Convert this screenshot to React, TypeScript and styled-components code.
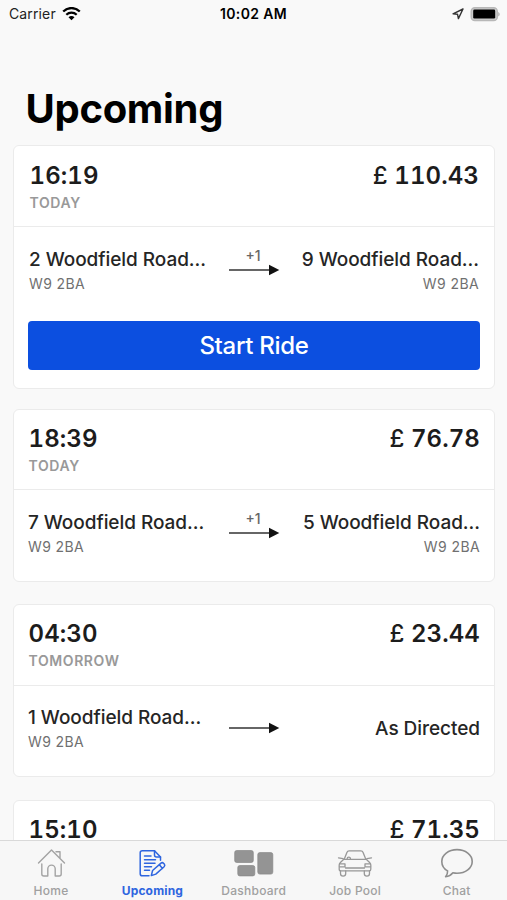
import React from 'react';
import styled, { createGlobalStyle } from 'styled-components';

const GlobalStyle = createGlobalStyle`
  * { box-sizing: border-box; }
  html, body { margin: 0; padding: 0; background: #f9f9f9; }
  body { font-family: Inter, "Liberation Sans", sans-serif; overflow: hidden; }
`;

const Screen = styled.div`
  width: 507px;
  height: 900px;
  display: flex;
  flex-direction: column;
  overflow: hidden;
  background: #f9f9f9;
  color: #1c1c1c;
`;

const StatusBar = styled.header`
  height: 28px;
  flex: none;
  display: grid;
  grid-template-columns: 1fr auto 1fr;
  align-items: center;
  padding: 0 7px 0 9px;
  color: #000;
  font-size: 14px;
  line-height: 28px;
`;

const StatusLeft = styled.div`
  display: flex;
  align-items: center;
  gap: 6px;
  color: #222;
  letter-spacing: 0.13px;
`;

const Clock = styled.div`
  font-weight: 600;
  letter-spacing: 0.35px;
  margin-left: -2px;
`;

const StatusRight = styled.div`
  display: flex;
  align-items: center;
  justify-content: flex-end;
  gap: 6px;
`;

const Title = styled.h1`
  flex: none;
  margin: 54px 0 0;
  padding-left: 25.5px;
  height: 63px;
  font-size: 40px;
  line-height: 54px;
  font-weight: 700;
  letter-spacing: -0.3px;
  color: #000;
`;

const List = styled.main`
  flex: 1;
  min-height: 0;
  overflow: hidden;
  display: flex;
  flex-direction: column;
  padding: 0 12px 0 13px;
`;

const Card = styled.article<{ $height: number; $gap: number; $inset?: boolean }>`
  flex: none;
  height: ${p => p.$height}px;
  margin-bottom: ${p => p.$gap}px;
  border: 1.5px solid #ebebeb;
  border-radius: 6px;
  background: #fff;
  --side: ${p => (p.$inset ? 15 : 14)}px;
  --drop: ${p => (p.$inset ? 1 : 0)}px;
`;

const CardHead = styled.div<{ $height: number }>`
  height: ${p => p.$height}px;
  display: flex;
  justify-content: space-between;
  border-bottom: 1.5px solid #ebebeb;
  padding: calc(14px + var(--drop)) var(--side) 0;
`;

const Time = styled.div`
  padding-left: 0.5px;
  font-size: 24px;
  line-height: 30px;
  font-weight: 640;
  font-variant-numeric: tabular-nums;
  letter-spacing: 0.1px;
`;

const Day = styled.div`
  margin-top: 3px;
  padding-left: 0.5px;
  font-size: 14px;
  line-height: 18px;
  font-weight: 600;
  letter-spacing: 0.6px;
  color: #999;
`;

const Price = styled(Time)`
  text-align: right;
`;

const Currency = styled.span`
  font-weight: 500;
`;

const Route = styled.div<{ $top: number }>`
  display: grid;
  grid-template-columns: 1fr 52px 1fr;
  height: 80px;
  padding: ${p => p.$top}px var(--side) 0;
`;

const Stop = styled.div<{ $end?: boolean; $single?: boolean }>`
  text-align: ${p => (p.$end ? 'right' : 'left')};
  padding-top: ${p => (p.$single ? 11 : 0)}px;
  white-space: nowrap;
`;

const Street = styled.div`
  font-size: 19px;
  line-height: 28px;
  font-weight: 450;
  letter-spacing: -0.05px;
  color: #252525;
`;

const Postcode = styled.div`
  font-size: 14px;
  line-height: 20px;
  letter-spacing: 0.4px;
  color: #707070;
`;

const Leg = styled.div`
  display: flex;
  flex-direction: column;
  align-items: center;
`;

const Extra = styled.div`
  height: 18px;
  margin-right: 2px;
  font-size: 14px;
  line-height: 19px;
  font-weight: 500;
  color: #666;
`;

const StartButton = styled.button`
  display: block;
  width: 452.5px;
  height: 49px;
  margin: 14px auto 0;
  border: 0;
  border-radius: 4px;
  background: #0c4fe0;
  color: #fff;
  font: 450 24px/49px Inter, sans-serif;
  letter-spacing: -0.3px;
  padding: 0;
`;

const TabBar = styled.nav`
  flex: none;
  height: 60px;
  display: grid;
  grid-template-columns: repeat(5, 1fr);
  border-top: 1px solid #d9d9d9;
  background: #f7f7f7;
`;

const Tab = styled.a<{ $active?: boolean }>`
  display: flex;
  flex-direction: column;
  align-items: center;
  color: ${p => (p.$active ? '#2e65df' : '#a0a0a0')};
  font-size: 12px;
  line-height: 16px;
  font-weight: ${p => (p.$active ? 650 : 550)};
  letter-spacing: ${p => (p.$active ? 0.15 : 0.25)}px;
  padding-left: 0.6px;
`;

const TabIcon = styled.span`
  height: 42px;
  display: block;
  svg { display: block; }
`;

const WifiIcon = () => (
  <svg width="19" height="15" viewBox="0 0 19 15" fill="none" stroke="#000">
    <path d="M1.2 4.5C5.9-.1 13.1-.1 17.8 4.5" strokeWidth="2.3" />
    <path d="M4.3 7.8c3-2.9 7.4-2.9 10.4 0" strokeWidth="2.2" />
    <path d="M9.5 13.3l-3-3.1c1.7-1.5 4.3-1.5 6 0z" fill="#000" stroke="none" />
  </svg>
);

const LocationIcon = () => (
  <svg width="13" height="13" viewBox="0 0 13 13" fill="none" stroke="#333" strokeWidth="1.4" strokeLinejoin="round">
    <path d="M12 1L2 5.8l4.5.4.9 4.4z" />
  </svg>
);

const BatteryIcon = () => (
  <svg width="30" height="15" viewBox="0 0 30 15">
    <rect x="1.2" y=".7" width="26.1" height="12.8" rx="3.6" fill="#ccc" stroke="#b8b8b8" strokeWidth="1.4" />
    <rect x="3.2" y="2.6" width="22" height="9" rx="1.3" fill="#000" />
    <path d="M28.2 4.9c2 1 2 3.6 0 4.6z" fill="#b3b3b3" />
  </svg>
);

const Arrow = () => (
  <svg width="51" height="12" viewBox="0 0 51 12">
    <path d="M0 6h41" stroke="#333" strokeWidth="1.5" />
    <path d="M40 .8L50.3 6 40 11.2z" fill="#111" />
  </svg>
);

const HomeIcon = () => (
  <svg width="30" height="42" viewBox="0 0 30 42" fill="none" stroke="#a3a3a3" strokeWidth="1.4" strokeLinecap="round" strokeLinejoin="round">
    <path d="M2.5 22L15.5 9l13 13M20 10.7h4v6.4" />
    <path d="M5.8 23v10q0 2 2 2h4v-7.2a3.7 3.7 0 0 1 7.4 0V35h4q2 0 2-2V23" />
  </svg>
);

const NoteIcon = () => (
  <svg width="30" height="42" viewBox="-.5 0 30 42" fill="none" stroke="#2e65df" strokeWidth="1.5" strokeLinecap="round" strokeLinejoin="round">
    <path d="M11.5 34.8H4.8q-2.1 0-2.1-2.1V11.8q0-2.1 2.1-2.1H17l6 6.2v3.3" />
    <path d="M17 9.7v4.2q0 2 2 2h4" />
    <path d="M7 15h6.5M7 18.7h11M7 22.2h10.5M7 25.7h7M7 29.2h5" />
    <path d="M15.1 29.5l8.4-7.4q1.4-1.1 2.7.3l.7.9q.9 1.3-.3 2.5l-8.3 7.3-4.5 1.5zM21.9 23.8l3.1 3.6" />
  </svg>
);

const DashboardIcon = () => (
  <svg width="40" height="42" viewBox="0 0 40 42" fill="#949494" stroke="#888" strokeWidth=".7">
    <rect x=".7" y="9.5" width="18.6" height="12" rx="2" />
    <rect x="3.8" y="24.5" width="17" height="10.4" rx="2" />
    <rect x="23.8" y="11.6" width="15" height="21.5" rx="2" />
  </svg>
);

const CarIcon = () => (
  <svg width="36" height="42" viewBox="0 0 36 42" fill="none" stroke="#989898" strokeWidth="1.3" strokeLinecap="round" strokeLinejoin="round">
    <path d="M7.2 18.2l2.7-6.8q.6-1.6 2.2-1.6h11.8q1.6 0 2.2 1.6l2.7 6.8M1.5 16.8l4.5.8M34.5 16.8l-4.5.8" />
    <path d="M6.8 18.3h22.4l3.4 3.2q1.2 1.1 1.2 2.6v4.2q0 1.6-1.6 1.6H3.8q-1.6 0-1.6-1.6v-4.2q0-1.5 1.2-2.6zM10 18c.3-2.4 3.3-2.4 3.6 0" />
    <path d="M3 22.8h5v3H2.5M33 22.8h-5v3h5.5M8.5 27h19" />
    <path d="M3.5 30v2.5a2.6 2.6 0 0 0 5.2 0V30M27.3 30v2.5a2.6 2.6 0 0 0 5.2 0V30" />
  </svg>
);

const ChatIcon = () => (
  <svg width="34" height="42" viewBox="0 0 34 42" fill="none" stroke="#8e8e8e" strokeWidth="1.6" strokeLinejoin="round">
    <path d="M17 8.6C8.5 8.6 1.8 13.8 1.8 20.4c0 4 2.2 7.4 5.8 9.5.1 2.7-.7 4.4-2 5.8 3.2-.3 5.6-1.8 7.3-4 1.3.3 2.7.5 4.1.5 8.5 0 15.2-5.2 15.2-11.8S25.5 8.6 17 8.6z" />
  </svg>
);

type Place = { street: string; code?: string };
type Ride = {
  time: string; day?: string; price: string; from?: Place; to?: Place;
  extra?: string; ready?: boolean; height: number; head: number; gap: number;
};

const rides: Ride[] = [
  { time: '16:19', day: 'TODAY', price: '110.43', from: { street: '2 Woodfield Road...', code: 'W9 2BA' }, to: { street: '9 Woodfield Road...', code: 'W9 2BA' }, extra: '+1', ready: true, height: 244, head: 81, gap: 20 },
  { time: '18:39', day: 'TODAY', price: '76.78', from: { street: '7 Woodfield Road...', code: 'W9 2BA' }, to: { street: '5 Woodfield Road...', code: 'W9 2BA' }, extra: '+1', height: 173, head: 80, gap: 22 },
  { time: '04:30', day: 'TOMORROW', price: '23.44', from: { street: '1 Woodfield Road...', code: 'W9 2BA' }, to: { street: 'As Directed' }, height: 173, head: 81, gap: 23 },
  { time: '15:10', price: '71.35', height: 173, head: 81, gap: 22 },
];

const tabs = [
  { label: 'Home', Icon: HomeIcon },
  { label: 'Upcoming', Icon: NoteIcon, active: true },
  { label: 'Dashboard', Icon: DashboardIcon },
  { label: 'Job Pool', Icon: CarIcon },
  { label: 'Chat', Icon: ChatIcon },
];

const RideCard = ({ ride }: { ride: Ride }) => (
  <Card $height={ride.height} $gap={ride.gap} $inset={ride.ready}>
    <CardHead $height={ride.head}>
      <div>
        <Time>{ride.time}</Time>
        {ride.day && <Day>{ride.day}</Day>}
      </div>
      <Price><Currency>£</Currency> {ride.price}</Price>
    </CardHead>
    {ride.from && ride.to && (
      <Route $top={ride.extra ? 19 : 18}>
        <Stop>
          <Street>{ride.from.street}</Street>
          <Postcode>{ride.from.code}</Postcode>
        </Stop>
        <Leg>
          <Extra>{ride.extra}</Extra>
          <Arrow />
        </Leg>
        <Stop $end $single={!ride.to.code}>
          <Street>{ride.to.street}</Street>
          {ride.to.code && <Postcode>{ride.to.code}</Postcode>}
        </Stop>
      </Route>
    )}
    {ride.ready && <StartButton>Start Ride</StartButton>}
  </Card>
);

export default function App() {
  return (
    <>
      <GlobalStyle />
      <Screen>
        <StatusBar>
          <StatusLeft>Carrier <WifiIcon /></StatusLeft>
          <Clock>10:02 AM</Clock>
          <StatusRight><LocationIcon /><BatteryIcon /></StatusRight>
        </StatusBar>
        <Title>Upcoming</Title>
        <List>
          {rides.map(ride => <RideCard key={ride.time} ride={ride} />)}
        </List>
        <TabBar>
          {tabs.map(({ label, Icon, active }) => (
            <Tab key={label} $active={active}>
              <TabIcon><Icon /></TabIcon>
              {label}
            </Tab>
          ))}
        </TabBar>
      </Screen>
    </>
  );
}
